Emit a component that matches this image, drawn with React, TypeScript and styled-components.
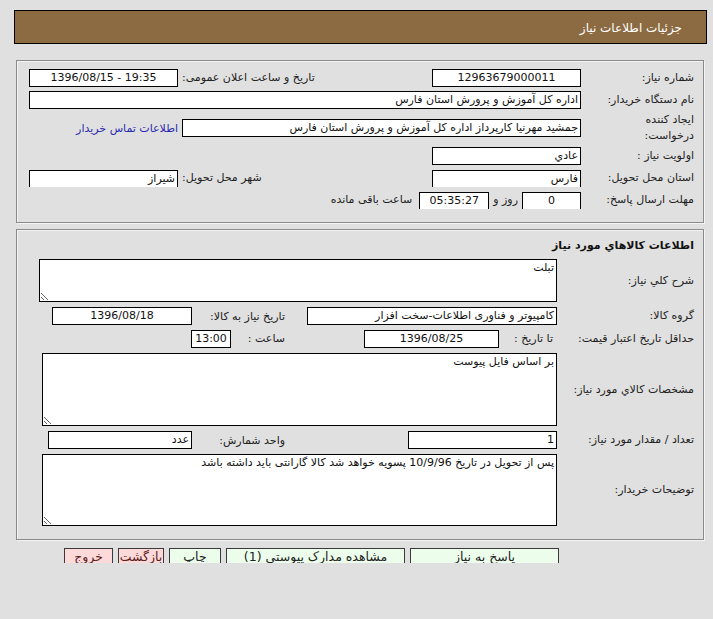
import styled, { createGlobalStyle } from "styled-components";

const GlobalStyle = createGlobalStyle`
  html, body {
    margin: 0;
    background: #e0e0e0;
  }
  body {
    font-family: "DejaVu Sans", Tahoma, sans-serif;
    font-size: 11px;
    color: #222;
  }
  * { box-sizing: border-box; }
`;

const Page = styled.div`
  direction: rtl;
  height: 563px;
  overflow: hidden;
  padding: 10px 6px 0 14px;
`;

const Header = styled.div`
  height: 34px;
  display: flex;
  align-items: center;
  padding: 2px 24px 0 0;
  background: #8c6b42;
  border: 1px solid #000;
  color: #fff;
  font-size: 12px;
`;

const Panel = styled.div<{ $top: number }>`
  margin: ${(p) => p.$top}px 3px 0 2px;
  border: 1px solid #8a8a8a;
  box-shadow: inset 1px 1px 0 #f4f4f4, 1px 1px 0 #f4f4f4;
`;

const InfoGrid = styled.div`
  display: grid;
  grid-template-columns: 109px 149px 246px 149px;
  grid-template-rows: 18px 18px 30px 18px 18px 18px;
  column-gap: 4px;
  row-gap: 4px;
  align-items: center;
  padding: 8px 9px 13px 12px;
`;

const Label = styled.div<{ $end?: boolean; $w?: number; $fill?: boolean }>`
  color: #222;
  line-height: 16px;
  white-space: nowrap;
  text-align: ${(p) => (p.$end ? "left" : "right")};
  ${(p) => (p.$w ? `width: ${p.$w}px; flex: none;` : "")}
  ${(p) => (p.$fill ? "flex: 1;" : "")}
`;

const Field = styled.div<{
  $w?: number;
  $align?: "center" | "right" | "left";
  $ltr?: boolean;
  $open?: boolean;
  $span?: string;
}>`
  ${(p) => (p.$w ? `width: ${p.$w}px;` : "")}
  ${(p) => (p.$span ? `grid-column: ${p.$span};` : "")}
  height: ${(p) => (p.$open ? 17 : 18)}px;
  background: #fff;
  border: 1px solid #000;
  ${(p) => (p.$open ? "border-bottom: none;" : "")}
  color: #111;
  line-height: 16px;
  padding: 0 2px;
  white-space: nowrap;
  overflow: hidden;
  text-align: ${(p) => p.$align ?? "right"};
  direction: ${(p) => (p.$ltr ? "ltr" : "rtl")};
  flex: none;
`;

const Inline = styled.div<{ $span: string }>`
  grid-column: ${(p) => p.$span};
  display: flex;
  align-items: center;
`;

const Gap = styled.span<{ $w: number }>`
  width: ${(p) => p.$w}px;
  flex: none;
`;

const Link = styled.a`
  color: #2b2bb0;
  text-decoration: none;
  white-space: nowrap;
  cursor: pointer;
`;

const GoodsBody = styled.div`
  padding: 6px 9px 13px 12px;
  display: flex;
  flex-direction: column;
  gap: 5px;
`;

const Title = styled.div`
  font-weight: bold;
  color: #111;
  line-height: 20px;
  margin-bottom: -2px;
`;

const Row = styled.div`
  display: flex;
  align-items: center;
`;

const RowLabel = styled.div`
  width: 137px;
  flex: none;
  line-height: 16px;
  white-space: nowrap;
`;

const Values = styled.div`
  display: grid;
  grid-template-columns: 250px 107px 140px;
  column-gap: 4px;
  align-items: center;
`;

const SubLabel = styled.div`
  padding-right: 18px;
  white-space: nowrap;
`;

const Cell = styled.div<{ $span?: string }>`
  display: flex;
  align-items: center;
  ${(p) => (p.$span ? `grid-column: ${p.$span};` : "")}
`;

const Area = styled.textarea<{ $w: number; $h: number }>`
  width: ${(p) => p.$w}px;
  height: ${(p) => p.$h}px;
  background: #fff;
  border: 1px solid #000;
  border-radius: 0;
  padding: 1px 2px;
  font-family: "DejaVu Sans", Tahoma, sans-serif;
  font-size: 11px;
  color: #111;
  direction: rtl;
  outline: none;
  flex: none;
`;

const Buttons = styled.div`
  display: flex;
  align-items: flex-start;
  gap: 5px;
  margin-top: 8px;
  padding-right: 148px;
`;

const Button = styled.button<{ $w: number; $tone: "green" | "red" }>`
  width: ${(p) => p.$w}px;
  height: 22px;
  padding: 0 0 5px;
  line-height: 15px;
  font-family: "DejaVu Sans", Tahoma, sans-serif;
  font-size: 12.5px;
  white-space: nowrap;
  border: 1px solid #3a3a3a;
  border-radius: 0;
  background: ${(p) => (p.$tone === "green" ? "#ecfdec" : "#fdd9d9")};
  color: ${(p) => (p.$tone === "green" ? "#222" : "#5a1e1e")};
  cursor: pointer;
`;

export default function App() {
  return (
    <>
      <GlobalStyle />
      <Page>
        <Header>جزئیات اطلاعات نیاز</Header>

        <Panel $top={16}>
          <InfoGrid>
            <Label>شماره نیاز:</Label>
            <Field $align="center" $ltr>
              12963679000011
            </Field>
            <Label $end>تاریخ و ساعت اعلان عمومی:</Label>
            <Field $align="center" $ltr>
              1396/08/15 - 19:35
            </Field>

            <Label>نام دستگاه خریدار:</Label>
            <Field $span="2 / 5">اداره کل آموزش و پرورش استان فارس</Field>

            <Label>
              ایجاد کننده
              <br />
              درخواست:
            </Label>
            <Field $span="2 / 4">
              جمشید مهرنیا کارپرداز اداره کل آموزش و پرورش استان فارس
            </Field>
            <Link>اطلاعات تماس خریدار</Link>

            <Label>اولویت نیاز :</Label>
            <Field>عادي</Field>
            <span />
            <span />

            <Label>استان محل تحویل:</Label>
            <Field $open>فارس</Field>
            <Label $end>شهر محل تحویل:</Label>
            <Field $open>شیراز</Field>

            <Label>مهلت ارسال پاسخ:</Label>
            <Inline $span="2 / 5">
              <Field $w={59} $align="center" $open>
                0
              </Field>
              <Gap $w={4} />
              <Label>روز و</Label>
              <Gap $w={4} />
              <Field $w={70} $align="center" $open>
                05:35:27
              </Field>
              <Gap $w={7} />
              <Label>ساعت باقی مانده</Label>
            </Inline>
          </InfoGrid>
        </Panel>

        <Panel $top={6}>
          <GoodsBody>
            <Title>اطلاعات کالاهاي مورد نیاز</Title>

            <Row>
              <RowLabel>شرح کلي نیاز:</RowLabel>
              <Area $w={518} $h={43} readOnly value="تبلت" />
            </Row>

            <Row>
              <RowLabel>گروه کالا:</RowLabel>
              <Values>
                <Field>کامپیوتر و فناوری اطلاعات-سخت افزار</Field>
                <SubLabel>تاریخ نیاز به کالا:</SubLabel>
                <Field $align="center">1396/08/18</Field>
              </Values>
            </Row>

            <Row>
              <RowLabel>حداقل تاریخ اعتبار قیمت:</RowLabel>
              <Values>
                <Cell>
                  <Gap $w={4} />
                  <Label $fill>تا تاریخ :</Label>
                  <Field $w={135} $align="center">
                    1396/08/25
                  </Field>
                  <Gap $w={57} />
                </Cell>
                <Cell $span="2 / 4">
                  <Gap $w={18} />
                  <Label $w={54}>ساعت :</Label>
                  <Field $w={40} $align="center">
                    13:00
                  </Field>
                </Cell>
              </Values>
            </Row>

            <Row>
              <RowLabel>مشخصات کالاي مورد نیاز:</RowLabel>
              <Area $w={515} $h={73} readOnly value="بر اساس فایل پیوست" />
            </Row>

            <Row>
              <RowLabel>تعداد / مقدار مورد نیاز:</RowLabel>
              <Values>
                <Cell>
                  <Field $w={149}>1</Field>
                </Cell>
                <SubLabel>واحد شمارش:</SubLabel>
                <Cell>
                  <Field $w={144}>عدد</Field>
                </Cell>
              </Values>
            </Row>

            <Row>
              <RowLabel>توضیحات خریدار:</RowLabel>
              <Area
                $w={515}
                $h={72}
                readOnly
                value="پس از تحویل در تاریخ 10/9/96 پسویه خواهد شد کالا گارانتی باید داشته باشد"
              />
            </Row>
          </GoodsBody>
        </Panel>

        <Buttons>
          <Button $w={149} $tone="green">
            پاسخ به نیاز
          </Button>
          <Button $w={179} $tone="green">
            مشاهده مدارک پیوستي (1)
          </Button>
          <Button $w={52} $tone="green">
            چاپ
          </Button>
          <Button $w={46} $tone="red">
            بازگشت
          </Button>
          <Button $w={49} $tone="red">
            خروج
          </Button>
        </Buttons>
      </Page>
    </>
  );
}
